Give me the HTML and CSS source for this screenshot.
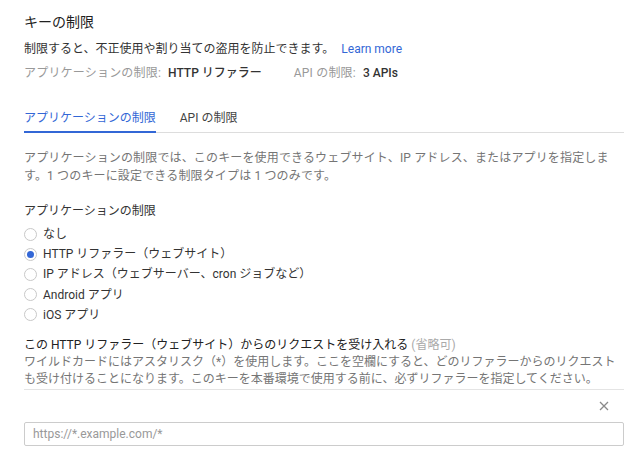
FILE: index.html
```html
<!doctype html>
<html lang="ja">
  <head>
    <meta charset="UTF-8" />
    <meta name="viewport" content="width=device-width, initial-scale=1.0" />
    <title>キーの制限</title>
    <link rel="stylesheet" href="styles.css">
  </head>
  <body>
    <div class="panel">
      <h1 class="title">キーの制限</h1>
      <p class="intro">
        制限すると、不正使用や割り当ての盗用を防止できます。
        <a href="#" class="link">Learn more</a>
      </p>
      <div class="summary">
        <span class="summary-item">
          <span class="summary-label">アプリケーションの制限:</span>
          <span class="summary-value">HTTP リファラー</span>
        </span>
        <span class="summary-item">
          <span class="summary-label">API の制限:</span>
          <span class="summary-value">3 APIs</span>
        </span>
      </div>

      <div class="tabs">
        <div class="tab tab-active">アプリケーションの制限</div>
        <div class="tab">API の制限</div>
      </div>

      <p class="help">
        アプリケーションの制限では、このキーを使用できるウェブサイト、IP アドレス、またはアプリを指定します。1 つのキーに設定できる制限タイプは 1 つのみです。
      </p>

      <div class="field-title">アプリケーションの制限</div>
      <div class="radio-list">
        <label class="radio-row"><input type="radio" name="restrict" /> なし</label>
        <label class="radio-row"><input type="radio" name="restrict" checked /> HTTP リファラー（ウェブサイト）</label>
        <label class="radio-row"><input type="radio" name="restrict" /> IP アドレス（ウェブサーバー、cron ジョブなど）</label>
        <label class="radio-row"><input type="radio" name="restrict" /> Android アプリ</label>
        <label class="radio-row"><input type="radio" name="restrict" /> iOS アプリ</label>
      </div>

      <div class="referer">
        <div class="referer-label">
          この HTTP リファラー（ウェブサイト）からのリクエストを受け入れる <span class="optional">(省略可)</span>
        </div>
        <p class="referer-help">
          ワイルドカードにはアスタリスク（*）を使用します。ここを空欄にすると、どのリファラーからのリクエストも受け付けることになります。このキーを本番環境で使用する前に、必ずリファラーを指定してください。
        </p>
      </div>

      <div class="item-row">
        <button type="button" class="btn-remove" aria-label="削除">
          <svg width="10" height="10" viewBox="0 0 10 10">
            <path d="M1 1L9 9M9 1L1 9" stroke="#8a8a8a" stroke-width="1.3" fill="none" />
          </svg>
        </button>
      </div>
      <input type="text" class="referer-input" placeholder="https://*.example.com/*" />
    </div>
  </body>
</html>
```

FILE: styles.css
```css
* {
  margin: 0;
  padding: 0;
  box-sizing: border-box;
}

body {
  font-family: Roboto, "Noto Sans CJK JP", sans-serif;
  font-size: 12px;
  line-height: 18px;
  color: #333;
  background: white;
}

.panel {
  padding: 12px 16px 0 24px;
}

.title {
  font-size: 14px;
  line-height: 20px;
  font-weight: normal;
  color: #212121;
}

.intro {
  margin-top: 8px;
  color: #333;
}

.link {
  color: #3367d6;
  text-decoration: none;
  margin-left: 4px;
}

.summary {
  margin-top: 6px;
  display: flex;
  gap: 32px;
}

.summary-label {
  color: #999;
  letter-spacing: 0.2px;
}

.summary-value {
  color: #333;
  font-weight: 500;
  margin-left: 4px;
}

.tabs {
  margin-top: 27px;
  display: flex;
  gap: 24px;
  border-bottom: 1px solid #ddd;
}

.tab {
  padding-bottom: 4px;
  border-bottom: 2px solid transparent;
  margin-bottom: -1px;
  color: #444;
}

.tab-active {
  color: #3367d6;
  border-bottom-color: #3367d6;
}

.help {
  margin-top: 16px;
  padding-right: 14px;
  letter-spacing: 0.15px;
  color: #757575;
}

.field-title {
  margin-top: 17px;
  color: #333;
}

.radio-list {
  margin-top: 4px;
  display: flex;
  flex-direction: column;
}

.radio-row {
  display: flex;
  align-items: center;
  gap: 6px;
  height: 20.2px;
  color: #333;
}

.radio-row input {
  appearance: none;
  width: 13px;
  height: 13px;
  border: 1px solid #c8c8c8;
  border-radius: 50%;
  background: white;
  display: grid;
  place-items: center;
}

.radio-row input:checked::after {
  content: "";
  width: 7px;
  height: 7px;
  border-radius: 50%;
  background: #3367d6;
}

.referer {
  margin-top: 11px;
  padding-bottom: 1px;
  border-bottom: 1px solid #e4e4e4;
}

.referer-label {
  color: #212121;
}

.optional {
  color: #aaa;
}

.referer-help {
  color: #757575;
  line-height: 17px;
}

.item-row {
  display: flex;
  justify-content: flex-end;
  height: 32px;
  align-items: center;
  padding-right: 15px;
}

.btn-remove {
  border: none;
  background: none;
  display: flex;
  cursor: pointer;
}

.referer-input {
  width: 100%;
  height: 24px;
  border: 1px solid #ccc;
  border-radius: 2px;
  padding: 0 8px;
  font-family: Roboto, "Noto Sans CJK JP", sans-serif;
  font-size: 12px;
  color: #333;
}

.referer-input::placeholder {
  color: #999;
}
```
